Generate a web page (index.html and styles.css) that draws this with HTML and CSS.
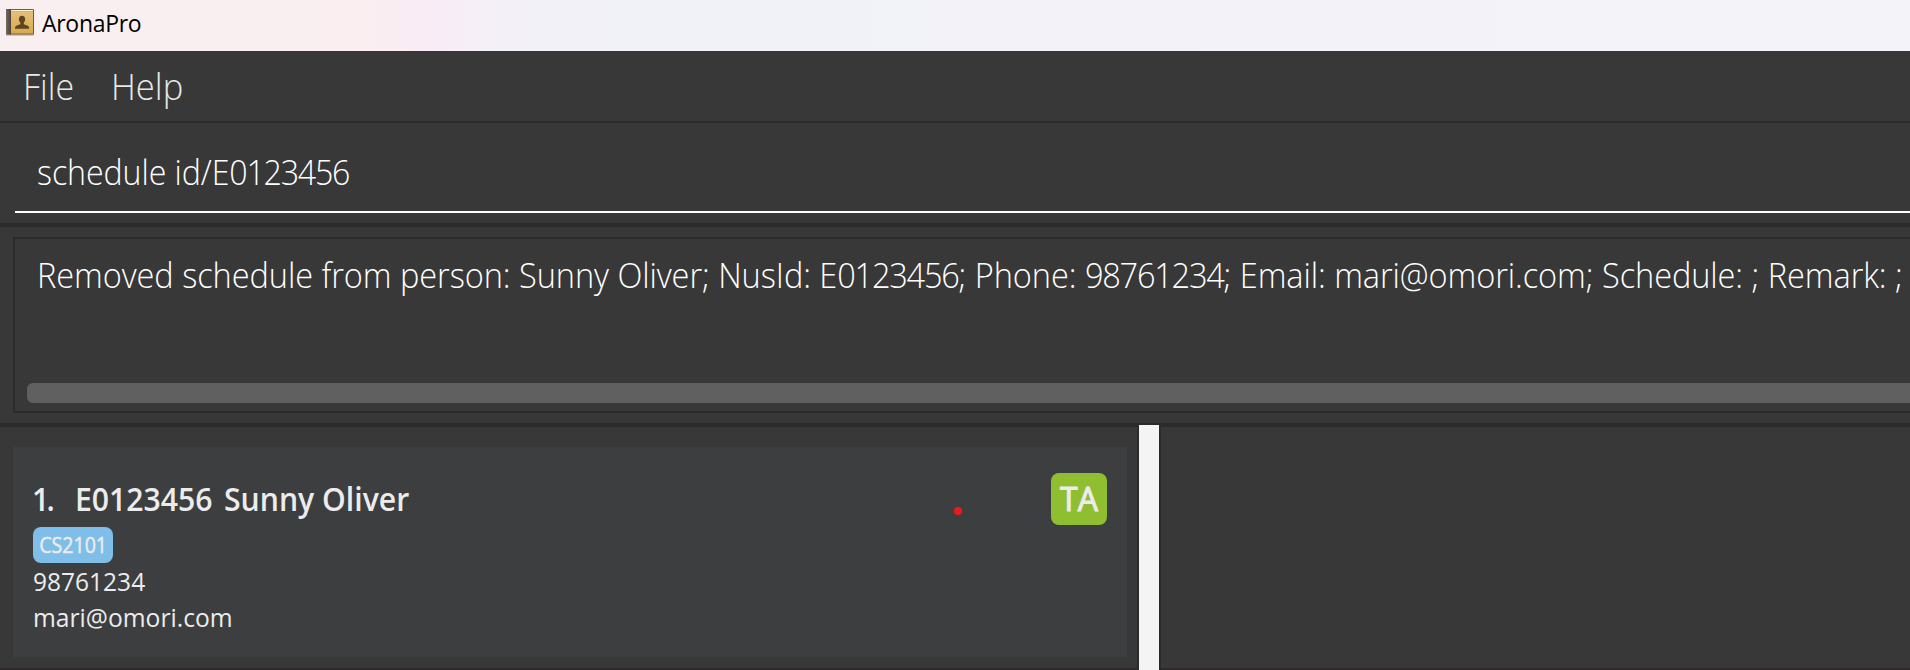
FILE: index.html
```html
<!DOCTYPE html>
<html lang="en">
<head>
<meta charset="utf-8">
<title>AronaPro</title>
<link rel="stylesheet" href="styles.css">
</head>
<body>
<div class="window">
  <header class="titlebar">
    <svg class="app-icon" width="30" height="30" viewBox="0 0 30 30">
      <defs>
        <linearGradient id="cover" x1="0" y1="0" x2="0" y2="1"><stop offset="0" stop-color="#e3c07c"/><stop offset="1" stop-color="#dba94c"/></linearGradient>
        <linearGradient id="spine" x1="0" y1="0" x2="1" y2="0"><stop offset="0" stop-color="#77695f"/><stop offset="1" stop-color="#4b4039"/></linearGradient>
      </defs>
      <rect x="1" y="25" width="28" height="3" rx="1" fill="#000" opacity=".18"/>
      <rect x="1" y="1" width="28" height="25.500" rx="1" fill="#7b5c27"/>
      <rect x="6" y="2" width="22" height="1.200" fill="#fff3cf"/>
      <rect x="6" y="3.200" width="22" height="22.300" fill="url(#cover)"/>
      <rect x="1" y="1" width="5" height="25.500" fill="url(#spine)"/>
      <path d="M17 7.700c2 0 3.200 1.300 3.200 3.400 0 1.500-.6 2.800-1.400 3.600v1.500l4 1.500c1 .5 1.400 1.200 1.400 3H10c0-1.800.4-2.500 1.400-3l4-1.500v-1.500c-.8-.8-1.500-2.100-1.500-3.600 0-2.100 1.100-3.400 3.100-3.400z" fill="#5c4525"/>
    </svg>
    <span class="title">AronaPro</span>
  </header>
  <nav class="menubar"><span class="file"><span class="narrow">File</span></span><span class="help narrow">Help</span></nav>
  <section class="command"><div class="command-field"><span class="command-text">schedule id/E<span class="num">0123456</span></span></div></section>
  <section class="result">
    <div class="result-box">
      <div class="result-line"><span class="result-text">Removed schedule from person: Sunny Oliver; NusId: E<span class="num">0123456</span>; Phone: <span class="num">98761234</span>; Email: mari@omori.com; Schedule: ; Remark: ;</span></div>
      <div class="scrollbar"></div>
    </div>
  </section>
  <main class="content">
    <section class="list">
      <article class="card">
        <div class="details">
          <h2 class="name-row"><span class="index"><span class="index-text narrow">1.</span></span><span class="id"><span class="narrow">E0123456</span></span><span class="name narrow">Sunny Oliver</span></h2>
          <span class="course"><span class="course-text">CS2101</span></span>
          <span class="phone narrow">98761234</span>
          <span class="email narrow">mari@omori.com</span>
        </div>
        <span class="role">TA</span>
        <i class="marker"></i>
      </article>
    </section>
    <div class="divider"></div>
    <section class="side"></section>
  </main>
</div>
</body>
</html>
```
FILE: styles.css
```css
* { box-sizing: border-box; }
body { margin: 0; background: #383838; font-family: "Open Sans", "Noto Sans", sans-serif; }
.window { width: 1910px; height: 670px; overflow: hidden; display: flex; flex-direction: column; white-space: nowrap; }
.narrow { display: inline-block; transform: scaleX(.943); transform-origin: 0 50%; }
.titlebar { height: 51px; flex: none; display: flex; align-items: flex-start; padding: 8px 0 0 5px; background: linear-gradient(90deg, #f9eff0 0, #faeef0 360px, #f9ecf6 430px, #f4f0f7 490px, #f0f2f7 640px, #f3f2f9 1100px, #f3f3f9 100%); }
.title { margin: -1px 0 0 7px; font-size: 23px; line-height: 32px; color: #000; letter-spacing: -0.3px; }
.menubar { height: 72px; flex: none; display: flex; padding: 10px 23px; border-bottom: 2px solid #2b2b2b; font-size: 36px; font-weight: 300; line-height: 51px; color: #e8e8e8; }
.file { width: 88px; }
.help { transform: scaleX(.96); }
.command { height: 104px; flex: none; padding: 0 0 0 15px; border-bottom: 4px solid #2b2b2b; }
.command-field { height: 90px; padding: 24px 0 0 22px; border-bottom: 2px solid #fff; }
.command-text, .result-text { display: inline-block; font-size: 35px; font-weight: 300; line-height: 50px; color: #fff; transform: scaleX(.93); transform-origin: 0 50%; letter-spacing: -0.1px; }
.command-text { transform: scaleX(.919); }
.result-text { word-spacing: .2px; }
.num { letter-spacing: -1.35px; }
.result { height: 200px; flex: none; padding: 10px 0 0 13px; border-bottom: 4px solid #2b2b2b; }
.result-box { height: 176px; display: flex; flex-direction: column; justify-content: space-between; padding: 11px 0 8px 12px; border: 2px solid #2b2b2b; border-right: 0; }
.result-line { width: 1883px; height: 50px; padding-left: 10px; }
.scrollbar { height: 20px; border-radius: 6px 0 0 6px; background: #606060; }
.content { flex: 1; display: flex; }
.list { width: 1139px; padding: 20px 10px 11px 13px; border-right: 2px solid #2b2b2b; border-bottom: 2px solid #2e2a2b; }
.card { position: relative; height: 210px; display: flex; justify-content: space-between; padding: 26px 20px 0; background: #3c3e3f; color: #ececec; }
.details { display: flex; flex-direction: column; align-items: flex-start; }
.name-row { display: flex; margin: 0; font-size: 32px; font-weight: 600; line-height: 51px; height: 52px; }
.index { width: 42px; }
.index-text { margin-left: -1px; letter-spacing: -3px; }
.id { width: 149px; }
.course { display: flex; justify-content: center; height: 36px; width: 80px; margin-top: 2px; border-radius: 8px; background: #7fbee8; font-size: 22px; line-height: 35px; }
.course-text { transform: scaleX(.89); -webkit-text-stroke: .5px #ececec; }
.phone, .email { font-size: 26px; line-height: 36px; }
.email { transform: scaleX(.948); }
.role { width: 56px; height: 52px; border-radius: 8px; background: #8fbe31; text-align: center; font-size: 32px; line-height: 51px; -webkit-text-stroke: 1px #ececec; }
.marker { position: absolute; left: 941px; top: 60px; width: 8px; height: 8px; border-radius: 50%; background: #ec1b1b; }
.divider { width: 20px; margin-top: -2px; background: #f4f4f4; }
.side { flex: 1; border-left: 2px solid #2b2b2b; border-bottom: 2px solid #2e2a2b; }
```
